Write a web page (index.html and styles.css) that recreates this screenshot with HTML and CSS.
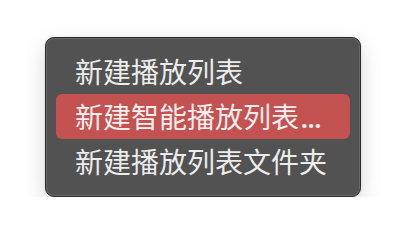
FILE: index.html
```html
<!doctype html>
<html lang="zh">
 <head>
  <meta charset="UTF-8">
  <link rel="stylesheet" href="styles.css">
  <title>菜单</title>
 </head>
 <body>
  <div class="menu">
   <div class="item">新建播放列表</div>
   <div class="item on">新建智能播放列表<span class="dots">...</span></div>
   <div class="item">新建播放列表文件夹</div>
  </div>
 </body>
</html>
```
FILE: styles.css
```css
body{margin:0;padding:37px 0 0 45px;background:#fff;}
.menu{
    width:316px;height:160px;
    box-sizing:border-box;
    padding:11px 10px;
    background:#515251;
    border:1px solid #2b2b2b;
    border-radius:9px;
    box-shadow:inset 0 0 0 1px #676867,0 8px 22px rgba(0,0,0,0.16),0 0 3px rgba(0,0,0,0.08);
    font:28px "Noto Sans CJK SC","Noto Sans",sans-serif;
    color:#ececec;
}
.item{
    height:45px;line-height:45px;
    padding-left:19px;
    border-radius:6px;
    white-space:nowrap;
}
.item.on{background:#c35250;color:#f4eeee;}
.dots{font:bold 24px "Noto Sans",sans-serif;margin-left:2px;}
```
